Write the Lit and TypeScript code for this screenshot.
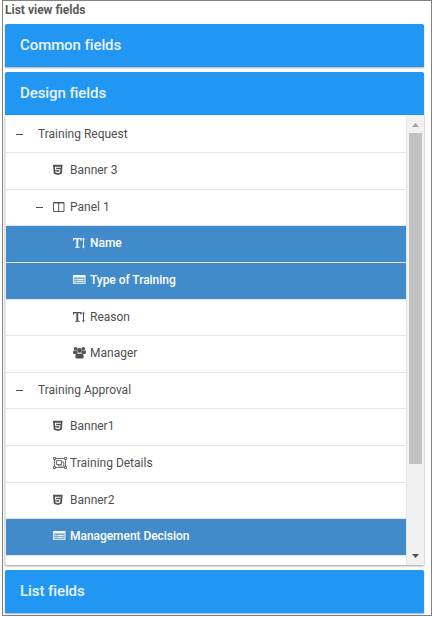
import { LitElement, html, css, svg, nothing } from "lit";
import { customElement } from "lit/decorators.js";
import { classMap } from "lit/directives/class-map.js";

type IconName = "html5" | "columns" | "text" | "list" | "users" | "group";

interface Row {
  label: string;
  level: number;
  icon?: IconName;
  open?: boolean;
  selected?: boolean;
}

const rows: Row[] = [
  { label: "Training Request", level: 0, open: true },
  { label: "Banner 3", level: 1, icon: "html5" },
  { label: "Panel 1", level: 1, icon: "columns", open: true },
  { label: "Name", level: 2, icon: "text", selected: true },
  { label: "Type of Training", level: 2, icon: "list", selected: true },
  { label: "Reason", level: 2, icon: "text" },
  { label: "Manager", level: 2, icon: "users" },
  { label: "Training Approval", level: 0, open: true },
  { label: "Banner1", level: 1, icon: "html5" },
  { label: "Training Details", level: 1, icon: "group" },
  { label: "Banner2", level: 1, icon: "html5" },
  { label: "Management Decision", level: 1, icon: "list", selected: true },
];

const icons: Record<IconName, unknown> = {
  html5: svg`<path fill="currentColor" d="M0 1.700h9.600l-.8 9L4.800 12 .8 10.700z"/><path fill="none" stroke="#fff" stroke-width="1.050" d="M7.900 4.300H2.500l.2 2.400h4.200l-.25 2.300-1.850.6-1.850-.6-.1-.9"/>`,
  columns: svg`<path fill="none" stroke="currentColor" stroke-width=".95" d="M.5 2.500h10.500v9H.5zM5.700 2.500v9M.5 3h10.500"/>`,
  text: svg`<path fill="currentColor" d="M0 2h8.600v2.800h-.8L7.300 3.200H5.200v7.500l1.500.3v.8H2V11l1.400-.3V3.200H1.300L.8 4.800H0z"/><path fill="none" stroke="currentColor" stroke-width="1" d="M10.500 2.500v9M9.300 3.300 10.500 2.200l1.200 1.100M9.300 10.600l1.200 1.100 1.200-1.100"/>`,
  list: svg`<path fill="currentColor" fill-opacity=".3" d="M1 4h10.500v6H1z"/><path fill="currentColor" fill-rule="evenodd" d="M.8 2h11q.7 0 .7.700v7.600q0 .7-.7.700H.7Q0 11 0 10.300V2.700Q0 2 .8 2zM1 4.300V10.200h10.500V4.300z"/><path fill="none" stroke="currentColor" stroke-opacity=".85" d="M2 6.500h1.500M4.500 6.500h6M2 8.500h1.500M4.500 8.500h6"/>`,
  users: svg`<g fill="currentColor"><circle cx="2.700" cy="2.800" r="1.800"/><circle cx="10.300" cy="2.800" r="1.800"/><circle cx="6.500" cy="4.400" r="2.400"/><path d="M.9 4.300q1.700 1 3 .2.100 1.700 1 2.400-1.500.1-2.100 1H1.200Q0 7.900 0 6.800 0 5 .9 4.300zM12.100 4.300q-1.700 1-3 .2-.1 1.700-1 2.400 1.500.1 2.100 1h1.600q1.200 0 1.200-1.100 0-1.800-.9-2.500zM4.300 7.200q2.200 1.300 4.400 0 2 .4 2 3.700 0 1.600-1.600 1.600H3.900q-1.600 0-1.600-1.600 0-3.300 2-3.700z"/></g>`,
  group: svg`<path fill="none" stroke="currentColor" stroke-width=".8" d="M1.500 2.500h11v9h-11zM3.500 4.500h5v4h-5zM8.500 6h2.300v4H5.500V8.500"/><path fill="#fff" stroke="currentColor" stroke-width=".8" d="M.5 1.500h2v2h-2zM11.500 1.500h2v2h-2zM.5 10.500h2v2h-2zM11.500 10.500h2v2h-2z"/>`,
};

@customElement("accordion-header")
export class AccordionHeader extends LitElement {
  static styles = css`
    :host {
      display: block;
      flex: none;
      height: 43px;
      padding-left: 15px;
      border-radius: 2px 2px 0 0;
      background: #2196f3;
      box-shadow: 0 1px 2px rgba(0, 0, 0, 0.32);
      color: #e9f4fe;
      font-weight: 500;
      font-size: 15px;
      letter-spacing: -0.08px;
      line-height: 42px;
    }
  `;
  render() {
    return html`<slot></slot>`;
  }
}

@customElement("field-tree")
export class FieldTree extends LitElement {
  static styles = css`
    :host {
      display: block;
      flex: 1;
      min-width: 0;
      overflow: hidden;
      padding-top: 0.59px;
      background: #fff;
      border: 1px solid #e4e8ea;
      border-width: 0 1px;
      border-radius: 3px 3px 0 0;
    }
    .row {
      display: flex;
      box-sizing: border-box;
      height: 36.6px;
      border-bottom: 1px solid #e1e6e9;
      color: #505050;
      font-size: 12px;
      line-height: 35px;
      white-space: nowrap;
    }
    .selected {
      background: #428bca;
      color: #fff;
      font-weight: 500;
      letter-spacing: -0.04px;
    }
    .level-0 { padding-left: 9px; }
    .level-1 { padding-left: 29px; }
    .level-2 { padding-left: 49px; }
    .toggle {
      width: 18px;
      flex: none;
      display: flex;
      align-items: center;
    }
    .dash {
      width: 7px;
      height: 1px;
      margin-left: 1px;
      background: #505050;
    }
    .level-0 .toggle { width: 23px; }
    .icon {
      width: 17px;
      height: 14px;
      flex: none;
      margin: 10px 0 0;
      overflow: visible;
    }
  `;
  render() {
    return rows.map(
      (r) => html`<div class=${classMap({ row: true, selected: !!r.selected, [`level-${r.level}`]: true })}>
        <span class="toggle">${r.open ? html`<i class="dash"></i>` : nothing}</span>
        ${r.icon ? html`<svg class="icon" viewBox="0 0 17 14">${icons[r.icon]}</svg>` : nothing}
        <span>${r.label}</span>
      </div>`
    );
  }
}

@customElement("scroll-bar")
export class ScrollBar extends LitElement {
  static styles = css`
    :host {
      display: flex;
      flex-direction: column;
      align-items: center;
      width: 17px;
      background: #f1f1f1;
    }
    .arrow { width: 7px; height: 4px; flex: none; }
    .up { margin: 7px 0 6px; fill: #a3a3a3; }
    .down { margin: auto 0 7px; fill: #505050; }
    .thumb { width: 13px; height: 331px; background: #c1c1c1; }
  `;
  render() {
    return html`<svg class="arrow up" viewBox="0 0 7 4"><path d="M3.500 0 7 4H0z" /></svg>
      <div class="thumb"></div>
      <svg class="arrow down" viewBox="0 0 7 4"><path d="M0 0h7L3.500 4z" /></svg>`;
  }
}

@customElement("app-root")
export class AppRoot extends LitElement {
  static styles = css`
    :host {
      display: block;
      height: 617px;
      overflow: hidden;
      background: #fff;
      font-family: Roboto, "Liberation Sans", sans-serif;
    }
    .frame {
      box-sizing: border-box;
      display: flex;
      flex-direction: column;
      width: 430px;
      height: 616px;
      margin-left: 2px;
      padding: 0 7px 0 2px;
      border: 1px solid #828282;
    }
    .title {
      height: 23px;
      flex: none;
      color: #5a5a5a;
      font-weight: 700;
      font-size: 12px;
      line-height: 18px;
    }
    .common { margin-bottom: 5px; }
    .body {
      display: flex;
      height: 450px;
      flex: none;
      margin-bottom: 5px;
      box-sizing: border-box;
      padding-top: 1px;
      background: #f1f1f1;
      box-shadow: 0 1px 2px rgba(0, 0, 0, 0.4);
    }
  `;
  render() {
    return html`<div class="frame">
      <div class="title">List view fields</div>
      <accordion-header class="common">Common fields</accordion-header>
      <accordion-header>Design fields</accordion-header>
      <div class="body">
        <field-tree></field-tree>
        <scroll-bar></scroll-bar>
      </div>
      <accordion-header>List fields</accordion-header>
    </div>`;
  }
}
